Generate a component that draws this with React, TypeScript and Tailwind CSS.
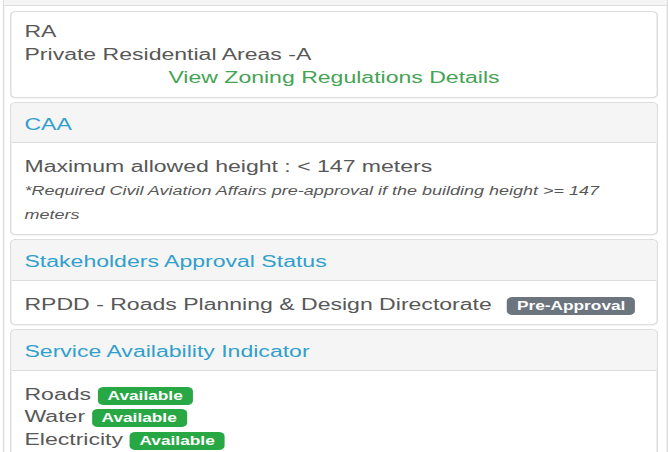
import React from "react";

function Badge({ children, color }: { children: React.ReactNode; color: string }) {
  return (
    <span
      className={`inline-block rounded-[4px] px-[7px] py-[3px] align-baseline text-[12px] font-bold leading-none text-white ${color}`}
    >
      {children}
    </span>
  );
}

function Panel({ title, children, bodyClass }: { title?: string; children: React.ReactNode; bodyClass?: string }) {
  return (
    <div className="rounded-[4px] border border-[#dddddd] bg-white shadow-[0_1px_1px_rgba(0,0,0,0.05)]">
      {title && (
        <div className="rounded-t-[3px] border-b border-[#dddddd] bg-[#f5f5f5] px-[9px] pb-[6px] pt-[11px] text-[#31a0cc]">
          {title}
        </div>
      )}
      <div className={bodyClass ?? "px-[9px] pb-[7px] pt-[13px]"}>{children}</div>
    </div>
  );
}

export default function App() {
  return (
    <div className="h-[452px] w-[668px] overflow-hidden bg-white">
      <div
        className="w-[464px] origin-top-left [transform:scaleX(1.4397)] text-[16px] leading-[22.86px] text-[#585858]"
        style={{ fontFamily: '"Liberation Sans", Arial, Helvetica, sans-serif' }}
      >
        <div className="ml-[2px] border-x border-[#dddddd]">
          <div className="h-[6px] border-b border-[#dddddd] bg-[#f5f5f5]" />
          <div className="flex flex-col gap-[4px] pb-[20px] pl-[4px] pr-[6px] pt-[5px]">
            <Panel bodyClass="px-[9px] pb-[7px] pt-[9px]">
              <div>RA</div>
              <div>Private Residential Areas -A</div>
              <div className="text-center text-[#46a354]">View Zoning Regulations Details</div>
            </Panel>

            <Panel title="CAA">
              <div>Maximum allowed height : &lt; 147 meters</div>
              <div>
                <em className="text-[12.5px]">
                  *Required Civil Aviation Affairs pre-approval if the building height &gt;= 147 meters
                </em>
              </div>
            </Panel>

            <Panel title="Stakeholders Approval Status">
              <div>
                RPDD - Roads Planning &amp; Design Directorate{" "}
                <span className="ml-[6px]">
                  <Badge color="bg-[#6c757d]">Pre-Approval</Badge>
                </span>
              </div>
            </Panel>

            <Panel title="Service Availability Indicator">
              <div>
                Roads <Badge color="bg-[#28a745]">Available</Badge>
              </div>
              <div>
                Water <Badge color="bg-[#28a745]">Available</Badge>
              </div>
              <div>
                Electricity <Badge color="bg-[#28a745]">Available</Badge>
              </div>
            </Panel>
          </div>
        </div>
      </div>
    </div>
  );
}
